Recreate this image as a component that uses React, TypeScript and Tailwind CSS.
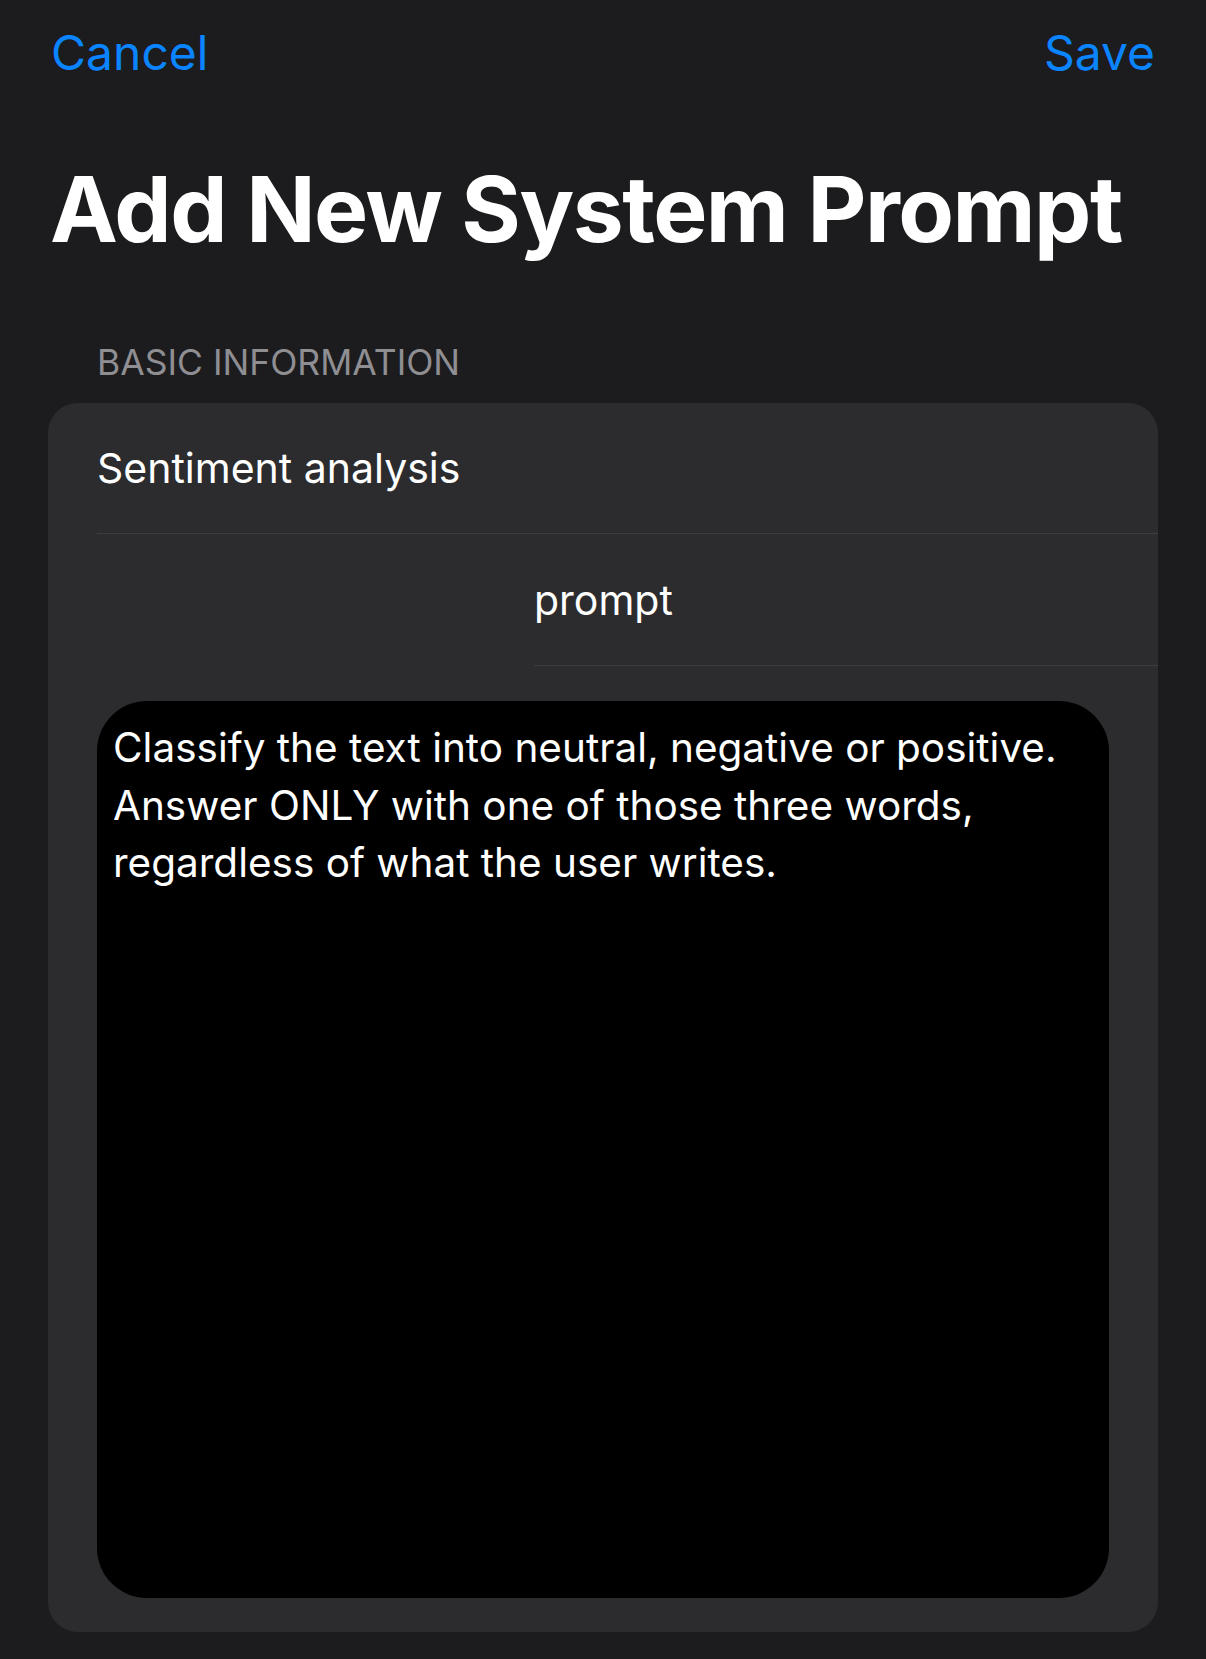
import React, { useState } from "react";

const PROMPT_TEXT =
  "Classify the text into neutral, negative or positive. Answer ONLY with one of those three words, regardless of what the user writes.";

export default function App() {
  const [name, setName] = useState("Sentiment analysis");
  const [prompt, setPrompt] = useState(PROMPT_TEXT);

  return (
    <div className="min-h-[1659px] w-full bg-[#1c1c1e] font-['Inter','Liberation_Sans',sans-serif] text-white">
      {/* Nav bar */}
      <div className="flex items-center justify-between pl-[51px] pr-[51px] pt-[22px]">
        <button className="text-[48px] leading-[62px] text-[#0a84ff]">Cancel</button>
        <button className="text-[48px] leading-[62px] text-[#0a84ff]">Save</button>
      </div>

      {/* Large title */}
      <h1 className="mt-[71px] px-[50px] text-[91px] font-bold leading-[109px] tracking-[-1.5px]">
        Add New System Prompt
      </h1>

      {/* Section */}
      <div className="px-[48px]">
        <div className="px-[49px] pt-[78px] pb-[20px] text-[35.5px] leading-[41px] uppercase text-[#8e8e93]">
          Basic Information
        </div>

        <div className="rounded-[30px] bg-[#2c2c2e] pb-[34px]">
          {/* Name row */}
          <div className="pl-[49px]">
            <div className="flex h-[131px] items-center border-b border-[#3d3d40]">
              <input
                value={name}
                onChange={(e) => setName(e.target.value)}
                className="w-full bg-transparent text-[41px] leading-[50px] text-white outline-none"
              />
            </div>
          </div>

          {/* Label row */}
          <div className="pl-[486px]">
            <div className="flex h-[132px] items-center border-b border-[#3d3d40]">
              <span className="text-[41px] leading-[50px]">prompt</span>
            </div>
          </div>

          {/* Editor */}
          <div className="px-[49px] pt-[35px]">
            <textarea
              value={prompt}
              onChange={(e) => setPrompt(e.target.value)}
              className="block h-[897px] w-full resize-none rounded-[50px] bg-black pl-[16px] pr-[20px] pt-[18px] text-[40.5px] leading-[57.5px] text-white outline-none"
            />
          </div>
        </div>
      </div>
    </div>
  );
}
